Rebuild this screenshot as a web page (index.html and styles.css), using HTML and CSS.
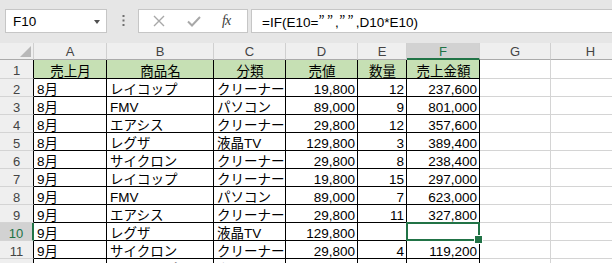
FILE: index.html
```html
<!DOCTYPE html>
<html lang="ja">
	<head>
		<meta charset="UTF-8" />
		<meta name="viewport" content="width=device-width, initial-scale=1.0" />
		<title>売上表</title>
		<link rel="stylesheet" href="styles.css">
	</head>
	<body>
		<!-- 数式バー -->
		<div class="toolbar">
			<div class="namebox"><span>F10</span><span class="arrow"></span></div>
			<div class="dots">
				<svg width="3" height="12" viewBox="0 0 3 12"><rect x="0.5" y="0" width="2" height="2" fill="#6f6f6f"/><rect x="0.5" y="4.5" width="2" height="2" fill="#6f6f6f"/><rect x="0.5" y="9" width="2" height="2" fill="#6f6f6f"/></svg>
			</div>
			<div class="fbtns">
				<svg class="btn-x" width="12" height="12" viewBox="0 0 12 12"><path d="M1 1L11 11M11 1L1 11" stroke="#a8a8a8" stroke-width="1.4" fill="none"/></svg>
				<svg class="btn-ok" width="14" height="12" viewBox="0 0 14 12"><path d="M1 6.5L5 10.5L13 2" stroke="#a8a8a8" stroke-width="2" fill="none"/></svg>
				<span class="fx">fx</span>
			</div>
			<div class="formula">=IF(E10=<span class="q">””</span>,<span class="q">””</span>,D10*E10)</div>
		</div>

		<!-- シート -->
		<div class="sheet">
			<div class="h corner"></div>
			<div class="h">A</div><div class="h">B</div><div class="h">C</div><div class="h">D</div><div class="h">E</div><div class="h on">F</div><div class="h">G</div><div class="h">H</div>

			<div class="rh">1</div>
			<div class="c t">売上月</div><div class="c t">商品名</div><div class="c t">分類</div><div class="c t">売値</div><div class="c t">数量</div><div class="c t">売上金額</div><div class="g"></div><div class="g"></div>

			<div class="rh">2</div>
			<div class="c">8月</div><div class="c">レイコップ</div><div class="c">クリーナー</div><div class="c n">19,800</div><div class="c n">12</div><div class="c n">237,600</div><div class="g"></div><div class="g"></div>

			<div class="rh">3</div>
			<div class="c">8月</div><div class="c">FMV</div><div class="c">パソコン</div><div class="c n">89,000</div><div class="c n">9</div><div class="c n">801,000</div><div class="g"></div><div class="g"></div>

			<div class="rh">4</div>
			<div class="c">8月</div><div class="c">エアシス</div><div class="c">クリーナー</div><div class="c n">29,800</div><div class="c n">12</div><div class="c n">357,600</div><div class="g"></div><div class="g"></div>

			<div class="rh">5</div>
			<div class="c">8月</div><div class="c">レグザ</div><div class="c">液晶TV</div><div class="c n">129,800</div><div class="c n">3</div><div class="c n">389,400</div><div class="g"></div><div class="g"></div>

			<div class="rh">6</div>
			<div class="c">8月</div><div class="c">サイクロン</div><div class="c">クリーナー</div><div class="c n">29,800</div><div class="c n">8</div><div class="c n">238,400</div><div class="g"></div><div class="g"></div>

			<div class="rh">7</div>
			<div class="c">9月</div><div class="c">レイコップ</div><div class="c">クリーナー</div><div class="c n">19,800</div><div class="c n">15</div><div class="c n">297,000</div><div class="g"></div><div class="g"></div>

			<div class="rh">8</div>
			<div class="c">9月</div><div class="c">FMV</div><div class="c">パソコン</div><div class="c n">89,000</div><div class="c n">7</div><div class="c n">623,000</div><div class="g"></div><div class="g"></div>

			<div class="rh">9</div>
			<div class="c">9月</div><div class="c">エアシス</div><div class="c">クリーナー</div><div class="c n">29,800</div><div class="c n">11</div><div class="c n">327,800</div><div class="g"></div><div class="g"></div>

			<div class="rh on">10</div>
			<div class="c">9月</div><div class="c">レグザ</div><div class="c">液晶TV</div><div class="c n">129,800</div><div class="c n"></div><div class="c n sel"></div><div class="g"></div><div class="g"></div>

			<div class="rh">11</div>
			<div class="c">9月</div><div class="c">サイクロン</div><div class="c">クリーナー</div><div class="c n">29,800</div><div class="c n">4</div><div class="c n">119,200</div><div class="g"></div><div class="g"></div>

			<div class="rh">12</div>
			<div class="c">10月</div><div class="c">レイコップ</div><div class="c">クリーナー</div><div class="c n">19,800</div><div class="c n">10</div><div class="c n">198,000</div><div class="g"></div><div class="g"></div>
		</div>
	</body>
</html>
```

FILE: styles.css
```css
* {
	margin: 0;
	padding: 0;
	box-sizing: border-box;
}
body {
	width: 612px;
	height: 263px;
	overflow: hidden;
	background-color: #fff;
	font-family: "Liberation Sans", "Noto Sans CJK JP", sans-serif;
	color: #000;
}

/* 数式バー */
.toolbar {
	height: 43px;
	padding: 9px 0 0 5px;
	background-color: #e6e6e6;
	display: flex;
	align-items: flex-start;
}
.namebox {
	width: 102px;
	height: 24px;
	border: 1px solid #c6c6c6;
	background-color: #fff;
	display: flex;
	align-items: center;
	justify-content: space-between;
	padding: 0 6px 0 7px;
	font-size: 13.5px;
}
.arrow {
	width: 0;
	height: 0;
	border-left: 3.5px solid transparent;
	border-right: 3.5px solid transparent;
	border-top: 4px solid #505050;
	margin-top: 1px;
}
.dots {
	width: 31px;
	height: 24px;
	display: flex;
	align-items: center;
	justify-content: center;
	padding-left: 2px;
}
.fbtns {
	width: 110px;
	height: 24px;
	border: 1px solid #c6c6c6;
	background-color: #fff;
	display: flex;
	align-items: center;
	padding-left: 14px;
}
.btn-x {
	margin-right: 22px;
}
.btn-ok {
	margin-right: 21px;
}
.fx {
	font-family: "Liberation Serif", "DejaVu Serif", serif;
	font-style: italic;
	font-size: 14px;
	color: #3c3c3c;
	letter-spacing: -1px;
}
.formula {
	flex: 1;
	height: 24px;
	margin-left: 3px;
	margin-right: -2px;
	border: 1px solid #c6c6c6;
	background-color: #fff;
	padding-left: 10px;
	font-size: 13.5px;
	line-height: 22px;
	white-space: nowrap;
}
.q {
	font-family: "Noto Sans CJK JP", sans-serif;
	letter-spacing: 2px;
}

/* シート */
.sheet {
	display: grid;
	grid-template-columns: 34px 73px 107px 72px 72px 49px 73px 71px 80px;
	grid-template-rows: 17px 19px repeat(10, 18px) 18px;
	font-size: 13.5px;
}
.sheet > div {
	border-right: 1px solid #d4d4d4;
	border-bottom: 1px solid #d4d4d4;
	white-space: nowrap;
	overflow: hidden;
}
.h {
	background-color: #efefef;
	color: #444;
	text-align: center;
	font-size: 13px;
	line-height: 17px;
	border-right-color: #d0d0d0 !important;
	border-bottom-color: #ababab !important;
}
.h.on {
	background-color: #d2d2d2;
	color: #217346;
	border-bottom: 2px solid #217346 !important;
}
.corner {
	position: relative;
}
.corner::after {
	content: "";
	position: absolute;
	right: 2px;
	bottom: 2px;
	width: 0;
	height: 0;
	border-left: 11px solid transparent;
	border-bottom: 11px solid #b8b8b8;
}
.rh {
	background-color: #efefef;
	color: #444;
	text-align: center;
	font-size: 13px;
	line-height: 17px;
	padding-top: 2px;
	border-right-color: #000 !important;
	border-bottom-color: #d4d4d4;
}
.rh.on {
	background-color: #d2d2d2;
	color: #217346;
	border-right: 2px solid #217346 !important;
}
.c {
	border-right-color: #000 !important;
	border-bottom-color: #000 !important;
	padding: 0 2px 0 3px;
	display: flex;
	align-items: flex-end;
	line-height: 12px;
}
.c.n {
	justify-content: flex-end;
}
.c.t {
	background-color: #c6e0b4;
	justify-content: center;
}
.sheet > .c.sel {
	position: relative;
	overflow: visible;
}
.sel::before {
	content: "";
	position: absolute;
	left: -1px;
	top: -1px;
	right: -1px;
	bottom: -1px;
	border: 2px solid #217346;
}
.sel::after {
	content: "";
	position: absolute;
	right: -4px;
	bottom: -4px;
	width: 7px;
	height: 7px;
	background-color: #217346;
	border: 1px solid #fff;
}
```
